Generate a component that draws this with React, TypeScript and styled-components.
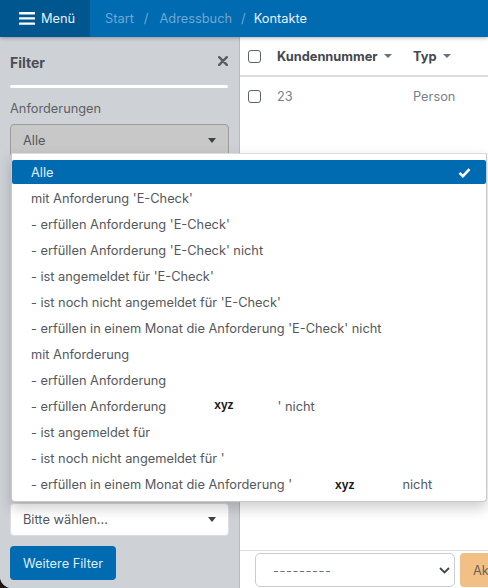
import React from 'react';
import styled, { createGlobalStyle } from 'styled-components';

const GlobalStyle = createGlobalStyle`
	html,
	body {
		margin: 0;
		padding: 0;
		background: #1a1412;
	}
	* {
		box-sizing: border-box;
	}
`;

const Page = styled.div`
	position: relative;
	width: 488px;
	height: 588px;
	overflow: hidden;
	background: #fff;
	border-bottom-left-radius: 12px;
	font-family: Inter, 'Liberation Sans', sans-serif;
	font-size: 12.8px;
	color: #495057;
	display: flex;
	flex-direction: column;
`;

const Header = styled.header`
	height: 37px;
	flex: none;
	background: #006bb0;
	display: flex;
	align-items: center;
	position: relative;
	z-index: 2;
	box-shadow: 0 1px 4px rgba(0, 0, 0, 0.3);
`;

const MenuButton = styled.div`
	width: 90px;
	height: 100%;
	background: #00578f;
	color: #e6f0f7;
	display: flex;
	align-items: center;
	gap: 6px;
	padding-left: 19px;
`;

const Crumbs = styled.nav`
	display: flex;
	align-items: center;
	padding-left: 15px;
	color: #6fa8d2;
`;

const Separator = styled.span<{ $tight?: boolean }>`
	margin: ${(p) => (p.$tight ? '0 8px 0 9px' : '0 11px 0 10px')};
`;

const CurrentCrumb = styled.span`
	color: #e8f2f9;
`;

const Body = styled.div`
	flex: 1;
	display: flex;
	min-height: 0;
`;

const Sidebar = styled.aside`
	width: 240px;
	flex: none;
	background: #ced1d6;
	border-right: 1px solid #b6b9bd;
	padding: 0 10px;
	display: flex;
	flex-direction: column;
`;

const FilterHead = styled.div`
	height: 48px;
	padding-top: 16px;
	display: flex;
	justify-content: space-between;
	align-items: flex-start;
`;

const FilterTitle = styled.h2`
	margin: 0;
	font-size: 14px;
	line-height: 20px;
	font-weight: 700;
	color: #4b4f54;
`;

const CloseIcon = styled.svg`
	width: 10px;
	height: 10px;
	margin: 3px 1px 0 0;
`;

const Rule = styled.div`
	height: 3px;
	width: 218px;
	background: #fff;
	border-radius: 2px;
`;

const FieldLabel = styled.div`
	margin-top: 11px;
	line-height: 20px;
	color: #5d6166;
`;

const SelectBox = styled.div<{ $open?: boolean }>`
	width: 219px;
	height: 33px;
	margin-top: ${(p) => (p.$open ? '5px' : '0')};
	border-radius: 4px;
	padding: 0 12px;
	display: flex;
	align-items: center;
	justify-content: space-between;
	color: #54585c;
	background: ${(p) => (p.$open ? '#c8c8c8' : '#fff')};
	border: 1px solid ${(p) => (p.$open ? '#9a9c9e' : '#dcdde0')};
`;

const Caret = styled.span<{ $color?: string; $small?: boolean }>`
	display: inline-block;
	border-left: ${(p) => (p.$small ? 4 : 4.5)}px solid transparent;
	border-right: ${(p) => (p.$small ? 4 : 4.5)}px solid transparent;
	border-top: ${(p) => (p.$small ? 4 : 5)}px solid ${(p) => p.$color ?? '#3f4246'};
`;

const SidebarBottom = styled.div`
	margin-top: auto;
	padding-bottom: 8px;
	display: flex;
	flex-direction: column;
	gap: 10px;
`;

const BlueButton = styled.button`
	width: 106px;
	height: 34px;
	border: 0;
	border-radius: 4px;
	background: #006bb0;
	color: #dfeef8;
	font: inherit;
	padding: 0;
`;

const Main = styled.main`
	flex: 1;
	min-width: 0;
	display: flex;
	flex-direction: column;
	overflow: hidden;
`;

const TableRow = styled.div<{ $head?: boolean }>`
	display: flex;
	align-items: center;
	flex: none;
	height: ${(p) => (p.$head ? '40px' : '39px')};
	padding-left: 8px;
	border-bottom: ${(p) => (p.$head ? '2px solid #dcdcdc' : '0')};
`;

const Check = styled.span`
	width: 13px;
	height: 13px;
	flex: none;
	border: 1px solid #5f6368;
	border-radius: 3px;
	background: #fff;
`;

const Cell = styled.div<{ $w: number; $head?: boolean }>`
	width: ${(p) => p.$w}px;
	flex: none;
	display: flex;
	align-items: center;
	gap: 6px;
	font-weight: ${(p) => (p.$head ? 700 : 400)};
	color: ${(p) => (p.$head ? '#44484d' : '#7a808a')};
`;

const KundenCell = styled(Cell)`
	margin-left: 16px;
`;

const Footer = styled.div`
	margin-top: auto;
	height: 38px;
	flex: none;
	border-top: 1px solid #dcdcdc;
	padding: 2px 0 0 15px;
	display: flex;
	gap: 5px;
`;

const PageSelect = styled.div`
	width: 200px;
	height: 34px;
	flex: none;
	border: 1px solid #c9ccd0;
	border-radius: 5px;
	padding: 0 4px 0 17px;
	display: flex;
	align-items: center;
	justify-content: space-between;
	color: #6e7276;
	letter-spacing: 0.6px;
`;

const ActionButton = styled.div`
	width: 60px;
	height: 34px;
	flex: none;
	background: #f2bf85;
	border-radius: 4px 0 0 4px;
	padding-left: 13px;
	display: flex;
	align-items: center;
	color: #6f6458;
`;

const Dropdown = styled.ul`
	position: absolute;
	z-index: 3;
	left: 11px;
	top: 153px;
	width: 476px;
	height: 349px;
	margin: 0;
	padding: 6px 0 0;
	list-style: none;
	background: #fff;
	border: 1px solid #c8c8c8;
	border-top-color: #dcdcdc;
	border-radius: 0 0 4px 4px;
	box-shadow: 0 6px 14px rgba(0, 0, 0, 0.2);
`;

const Option = styled.li<{ $selected?: boolean }>`
	height: 24px;
	margin-bottom: 2px;
	padding: 0 15px 0 19px;
	display: flex;
	align-items: center;
	justify-content: space-between;
	white-space: pre;
	border-radius: 2px;
	color: ${(p) => (p.$selected ? '#e4f0f8' : '#54585c')};
	background: ${(p) => (p.$selected ? '#006bb0' : 'transparent')};
`;

const OptionText = styled.span`
	display: flex;
	align-items: center;
`;

const Redacted = styled.b<{ $left: number; $right: number; $drop: number }>`
	margin: ${(p) => p.$drop}px ${(p) => p.$right}px 0 ${(p) => p.$left}px;
	font-family: 'Liberation Sans', sans-serif;
	font-size: 12px;
	font-weight: 700;
	color: #1c1c1c;
`;

const Tick = styled.svg`
	width: 13px;
	height: 11px;
`;

const options = [
	"mit Anforderung 'E-Check'",
	"- erfüllen Anforderung 'E-Check'",
	"- erfüllen Anforderung 'E-Check' nicht",
	"- ist angemeldet für 'E-Check'",
	"- ist noch nicht angemeldet für 'E-Check'",
	"- erfüllen in einem Monat die Anforderung 'E-Check' nicht",
	'mit Anforderung',
	'- erfüllen Anforderung',
];

export default function App(): JSX.Element {
	return (
		<Page>
			<GlobalStyle />
			<Header>
				<MenuButton>
					<svg width="16" height="13" viewBox="0 0 16 13" fill="#fff">
						<rect y="0" width="16" height="2.4" rx="0.6" />
						<rect y="5.2" width="16" height="2.4" rx="0.6" />
						<rect y="10.4" width="16" height="2.4" rx="0.6" />
					</svg>
					Menü
				</MenuButton>
				<Crumbs>
					Start
					<Separator>/</Separator>
					Adressbuch
					<Separator $tight>/</Separator>
					<CurrentCrumb>Kontakte</CurrentCrumb>
				</Crumbs>
			</Header>
			<Body>
				<Sidebar>
					<FilterHead>
						<FilterTitle>Filter</FilterTitle>
						<CloseIcon viewBox="0 0 10 10">
							<path d="M1.2 1.2l7.6 7.6M8.8 1.2l-7.6 7.6" stroke="#5a5e63" strokeWidth="2.4" strokeLinecap="round" />
						</CloseIcon>
					</FilterHead>
					<Rule />
					<FieldLabel>Anforderungen</FieldLabel>
					<SelectBox $open>
						Alle
						<Caret />
					</SelectBox>
					<SidebarBottom>
						<SelectBox>
							Bitte wählen...
							<Caret />
						</SelectBox>
						<BlueButton>Weitere Filter</BlueButton>
					</SidebarBottom>
				</Sidebar>
				<Main>
					<TableRow $head>
						<Check />
						<KundenCell $w={136} $head>
							Kundennummer
							<Caret $small $color="#6b7078" />
						</KundenCell>
						<Cell $w={80} $head>
							Typ
							<Caret $small $color="#6b7078" />
						</Cell>
					</TableRow>
					<TableRow>
						<Check />
						<KundenCell $w={136}>23</KundenCell>
						<Cell $w={80}>Person</Cell>
					</TableRow>
					<Footer>
						<PageSelect>
							---------
							<svg width="11" height="7" viewBox="0 0 11 7">
								<path d="M1 1l4.5 4.5L10 1" fill="none" stroke="#43474b" strokeWidth="1.8" />
							</svg>
						</PageSelect>
						<ActionButton>Ak</ActionButton>
					</Footer>
				</Main>
			</Body>
			<Dropdown>
				<Option $selected>
					Alle
					<Tick viewBox="0 0 13 11">
						<path d="M1.5 5.8l3.4 3.4 6.6-7" fill="none" stroke="#fff" strokeWidth="2.6" />
					</Tick>
				</Option>
				{options.map((text) => (
					<Option key={text}>{text}</Option>
				))}
				<Option>
					<OptionText>
						- erfüllen Anforderung
						<Redacted $left={48} $right={44} $drop={-2}>
							xyz
						</Redacted>
						' nicht
					</OptionText>
				</Option>
				<Option>- ist angemeldet für</Option>
				<Option>- ist noch nicht angemeldet für '</Option>
				<Option>
					<OptionText>
						- erfüllen in einem Monat die Anforderung '
						<Redacted $left={43} $right={48} $drop={2}>
							xyz
						</Redacted>
						nicht
					</OptionText>
				</Option>
			</Dropdown>
		</Page>
	);
}
